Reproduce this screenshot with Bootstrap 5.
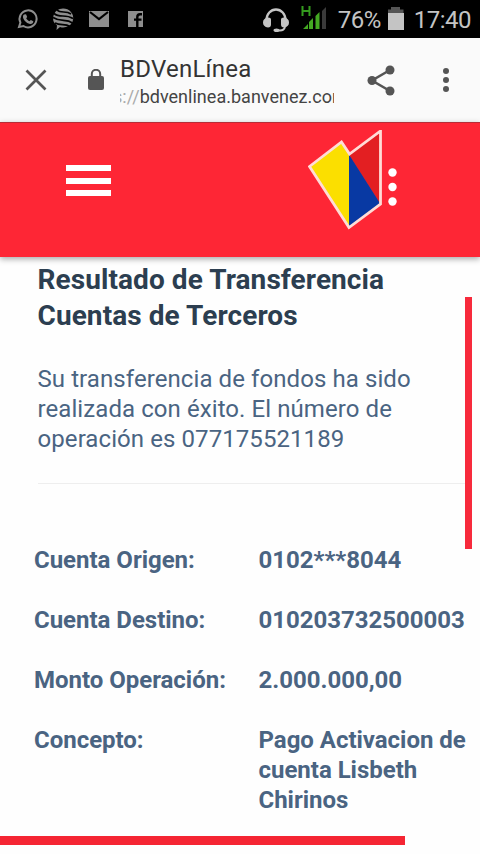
<!DOCTYPE html>
<html lang="es">
<head>
<meta charset="utf-8">
<meta name="viewport" content="width=device-width, initial-scale=1">
<title>BDVenLínea</title>
<link href="https://cdn.jsdelivr.net/npm/bootstrap@5.3.0/dist/css/bootstrap.min.css" rel="stylesheet">
<style>
body{font-family:Roboto,"Liberation Sans",sans-serif;background:#fefefe;color:#4a6482;font-size:24px;line-height:30px}
svg{display:block;flex:none}
.screen{width:480px;height:854px}
.statusbar{height:38px;background:#000;color:#c4c4c4;padding:0 9px 0 16px}
.statusbar .reading{font-size:24px;line-height:38px;letter-spacing:-.5px;padding-top:1px}
.charge{margin-left:9px}
.battery{margin-left:7px}
.clock{margin-left:10px}
.toolbar{height:84px;background:#fafafa;padding:0 31px 0 25px}
.lock{margin-left:40px}
.site{width:214px;margin-left:15px;color:#333;padding-top:16px}
.site-name{font-size:24px;line-height:30px;letter-spacing:.25px}
.site-url{font-size:18px;line-height:26px;letter-spacing:.02px;color:#444;text-indent:-7px}
.scheme{color:#aaa}
.brandbar{height:135px;background:#fe2635;border-top:1px solid #b82c36;box-shadow:0 2px 6px rgba(0,0,0,.35);padding:7px 82px 0 66px;z-index:1}
.burger{width:45px;height:31px;margin-top:35px}
.burger span{height:6px;background:#fff}
.result{padding:5px 15px 0 37.5px}
.result-title{font-size:28px;line-height:36px;font-weight:700;color:#2c3e50;letter-spacing:.08px;margin:0}
.message{margin:30px 0 0;width:400px;letter-spacing:.08px}
.rule{height:1px;background:#eee;margin-top:29px}
.details{padding:61px 0 0 34px;row-gap:30px;display:grid;grid-template-columns:224.5px 221.5px;font-weight:700}
.details dt,.details dd{font-weight:700;margin:0;letter-spacing:-.02px}
.vbar{right:8px;top:297px;width:7px;height:252px;background:#f72a3c}
.hbar{left:0;top:836px;width:405px;height:9px;background:#f52533}
</style>
<script src="https://cdn.jsdelivr.net/npm/bootstrap@5.3.0/dist/js/bootstrap.bundle.min.js"></script>
</head>
<body>
<div class="screen position-relative overflow-hidden">
<div class="statusbar d-flex align-items-center justify-content-between">
<div class="d-flex align-items-center">
<svg width="128" height="38" viewBox="16 0 128 38">
<g fill="none" stroke="#8e8e8e" stroke-width="2"><path d="M19 27l1.400-4.500A8.500 8.500 0 1 1 23.500 26z"/></g>
<path fill="#8e8e8e" d="M24 14.500l2-.3 1.200 2.700-1 1.300c.8 1.500 1.800 2.400 3.300 3.100l1.300-1.300 2.500 1.300c0 2-1.500 2.900-3.300 2.600-3.800-.8-7.200-4.500-7-7.500 0-.8.400-1.500 1-1.900z"/>
<path fill="#8e8e8e" d="M63 8.500a10 9.500 0 1 1-3 18.500l-3.500 3 .5-4.500A10 9.500 0 0 1 63 8.500z"/>
<g fill="none" stroke="#000" stroke-width="1.700"><path d="M57 10c4 4 9 0 14 4M54 13.500c6 5 11 0 19 5M53 17.500c8 5 13 1 19.500 5.500M55 23c6 3 10 0 15 3.500"/></g>
<path fill="#8e8e8e" d="M89 11h20v16H89z"/><path fill="none" stroke="#000" stroke-width="2.200" d="M90 12l9 7 9-7"/>
<path fill="#8e8e8e" d="M128 11h15v16H128z"/><path fill="none" stroke="#000" stroke-width="2.400" d="M137.300 27V17q0-2.800 2.700-2.800h2M134 19.600h7.500"/>
</svg>
</div>
<div class="d-flex align-items-center">
<svg width="66" height="38" viewBox="262 0 66 38">
<path fill="none" stroke="#c4c4c4" stroke-width="2.300" d="M265.500 20a9.500 10.500 0 0 1 19 0"/>
<path fill="#c4c4c4" d="M267 17.500q3 0 3 2v5q0 3-3 3-5-.8-5-5t5-5zM283 17.500q-3 0-3 2v5q0 3 3 3 5-.8 5-5t-5-5z"/>
<path fill="none" stroke="#c4c4c4" stroke-width="2" d="M284 27q-1 3.500-5 3.500h-4"/><ellipse cx="275.500" cy="30.300" rx="3" ry="1.800" fill="#c4c4c4"/>
<path fill="none" stroke="#349b1e" stroke-width="2" d="M301.500 6v10M308.500 6v10M301.500 11h7"/>
<path fill="#44a922" d="M302 29l5-5v5zM308 22l4-4v11h-4zM314.500 16l4-4v17h-4z"/><path fill="#3a3a3a" d="M321 11l4-4v22h-4z"/>
</svg>
<span class="reading charge">76%</span>
<svg class="battery" width="16" height="38" viewBox="388 0 16 38"><path fill="#555" d="M391 7h9v2.500h3.500V14h-16V9.500h3.500z"/><path fill="#c4c4c4" d="M388 13h16v17h-16z"/></svg>
<span class="reading clock">17:40</span>
</div>
</div>
<div class="toolbar d-flex align-items-center">
<svg width="22" height="22" viewBox="0 0 22 22"><path stroke="#555" stroke-width="2.700" d="M1.500 1.500l19 19M20.500 1.500l-19 19"/></svg>
<svg class="lock" width="18" height="22" viewBox="0 0 18 22"><rect x="1" y="7" width="16" height="14" rx="2" fill="#555"/><path fill="none" stroke="#555" stroke-width="2" d="M4.800 8V5a4.200 4.200 0 0 1 8.400 0v3"/></svg>
<div class="site align-self-start text-nowrap overflow-hidden"><div class="site-name">BDVenLínea</div><div class="site-url"><span class="scheme">s://</span>bdvenlinea.banvenez.com</div></div>
<svg class="ms-auto" width="28" height="31" viewBox="0 0 28 31"><path fill="none" stroke="#555" stroke-width="2.600" d="M23 5L5 15.500 23 26"/><g fill="#555"><circle cx="23" cy="5" r="4.500"/><circle cx="5" cy="15.500" r="4.500"/><circle cx="23" cy="26" r="4.500"/></g></svg>
<svg class="ms-5" width="6" height="26" viewBox="0 0 6 26"><g fill="#555"><circle cx="3" cy="4" r="3"/><circle cx="3" cy="13" r="3"/><circle cx="3" cy="22" r="3"/></g></svg>
</div>
<div class="brandbar d-flex justify-content-between position-relative">
<div class="burger d-flex flex-column justify-content-between"><span></span><span></span><span></span></div>
<svg width="90" height="102" viewBox="308 130 90 102">
<path fill="#fbdf00" d="M309.500 166.500L341.500 142 349 154.500V227.500z"/><path fill="#e31f22" d="M349 154.500L380.500 131V204z"/><path fill="#0839a3" d="M349 154.500L380.500 204 349 227.500z"/>
<path fill="none" stroke="#ffdcd6" stroke-width="2.800" d="M309.500 166.500L341.500 142 349.500 154 380.500 131V204L349 227.500z"/>
<g fill="#fff"><circle cx="392.500" cy="172.500" r="4.200"/><circle cx="392.500" cy="187" r="4.200"/><circle cx="392.500" cy="201.500" r="4.200"/></g></svg>
</div>
<main>
<div class="result"><h1 class="result-title">Resultado de Transferencia<br>Cuentas de Terceros</h1>
<p class="message text-nowrap">Su transferencia de fondos ha sido<br>realizada con éxito. El número de<br>operación es 077175521189</p>
<div class="rule"></div></div>
<dl class="details m-0 text-nowrap">
<dt>Cuenta Origen:</dt><dd>0102***8044</dd>
<dt>Cuenta Destino:</dt><dd>010203732500003</dd>
<dt>Monto Operación:</dt><dd>2.000.000,00</dd>
<dt>Concepto:</dt><dd>Pago Activacion de<br>cuenta Lisbeth<br>Chirinos</dd>
</dl>
</main>
<div class="vbar position-absolute"></div><div class="hbar position-absolute"></div>
</div>
</body>
</html>
